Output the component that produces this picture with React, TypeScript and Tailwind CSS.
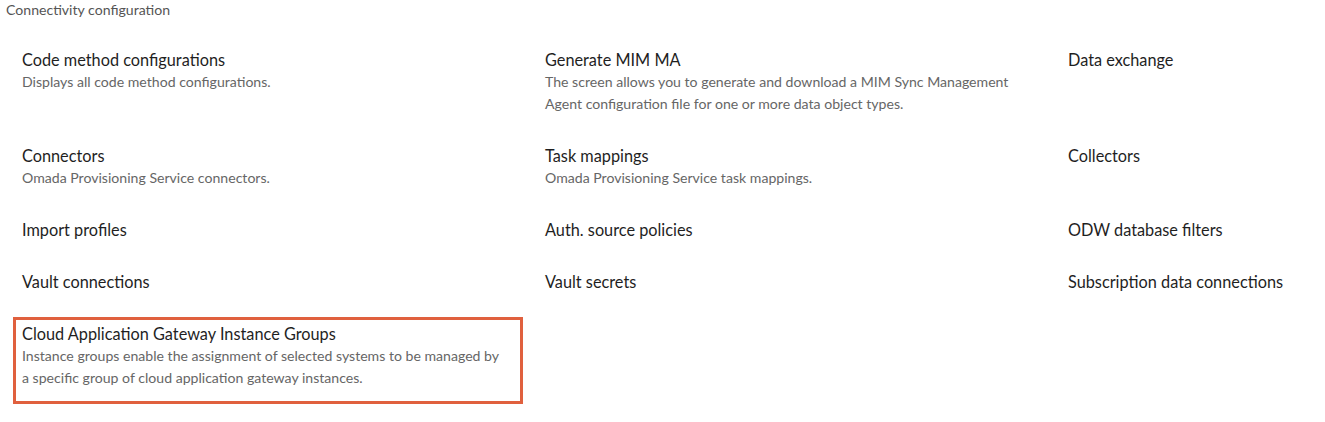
const items = [
  { title: 'Code method configurations', desc: 'Displays all code method configurations.' },
  {
    title: 'Generate MIM MA',
    desc: 'The screen allows you to generate and download a MIM Sync Management Agent configuration file for one or more data object types.',
  },
  { title: 'Data exchange' },
  { title: 'Connectors', desc: 'Omada Provisioning Service connectors.' },
  { title: 'Task mappings', desc: 'Omada Provisioning Service task mappings.' },
  { title: 'Collectors' },
  { title: 'Import profiles' },
  { title: 'Auth. source policies' },
  { title: 'ODW database filters' },
  { title: 'Vault connections' },
  { title: 'Vault secrets' },
  { title: 'Subscription data connections' },
  {
    title: 'Cloud Application Gateway Instance Groups',
    desc: 'Instance groups enable the assignment of selected systems to be managed by a specific group of cloud application gateway instances.',
    selected: true,
  },
];

export default function App() {
  return (
    <div className="h-[422px] w-[1325px] overflow-hidden bg-white font-['Lato',_'Liberation_Sans',_sans-serif]">
      <div className="px-[6px] pt-[1px] text-[14.1px] leading-[18px] text-[#555]">Connectivity configuration</div>
      <div className="mt-[24px] grid grid-cols-[510px_510px_510px] gap-x-[13px] gap-y-[9px] px-[13px]">
        {items.map((item) => (
          <div
            key={item.title}
            className={
              'border-[3px] pl-[6px] pr-[12px] pt-[3px] pb-[12px] ' +
              (item.selected ? 'border-[#e0603e]' : 'border-transparent')
            }
          >
            <div className="text-[16.3px] leading-[22px] text-[#1f1f1f]">{item.title}</div>
            {item.desc && <div className="text-[14.1px] leading-[22px] text-[#666]">{item.desc}</div>}
          </div>
        ))}
      </div>
    </div>
  );
}
